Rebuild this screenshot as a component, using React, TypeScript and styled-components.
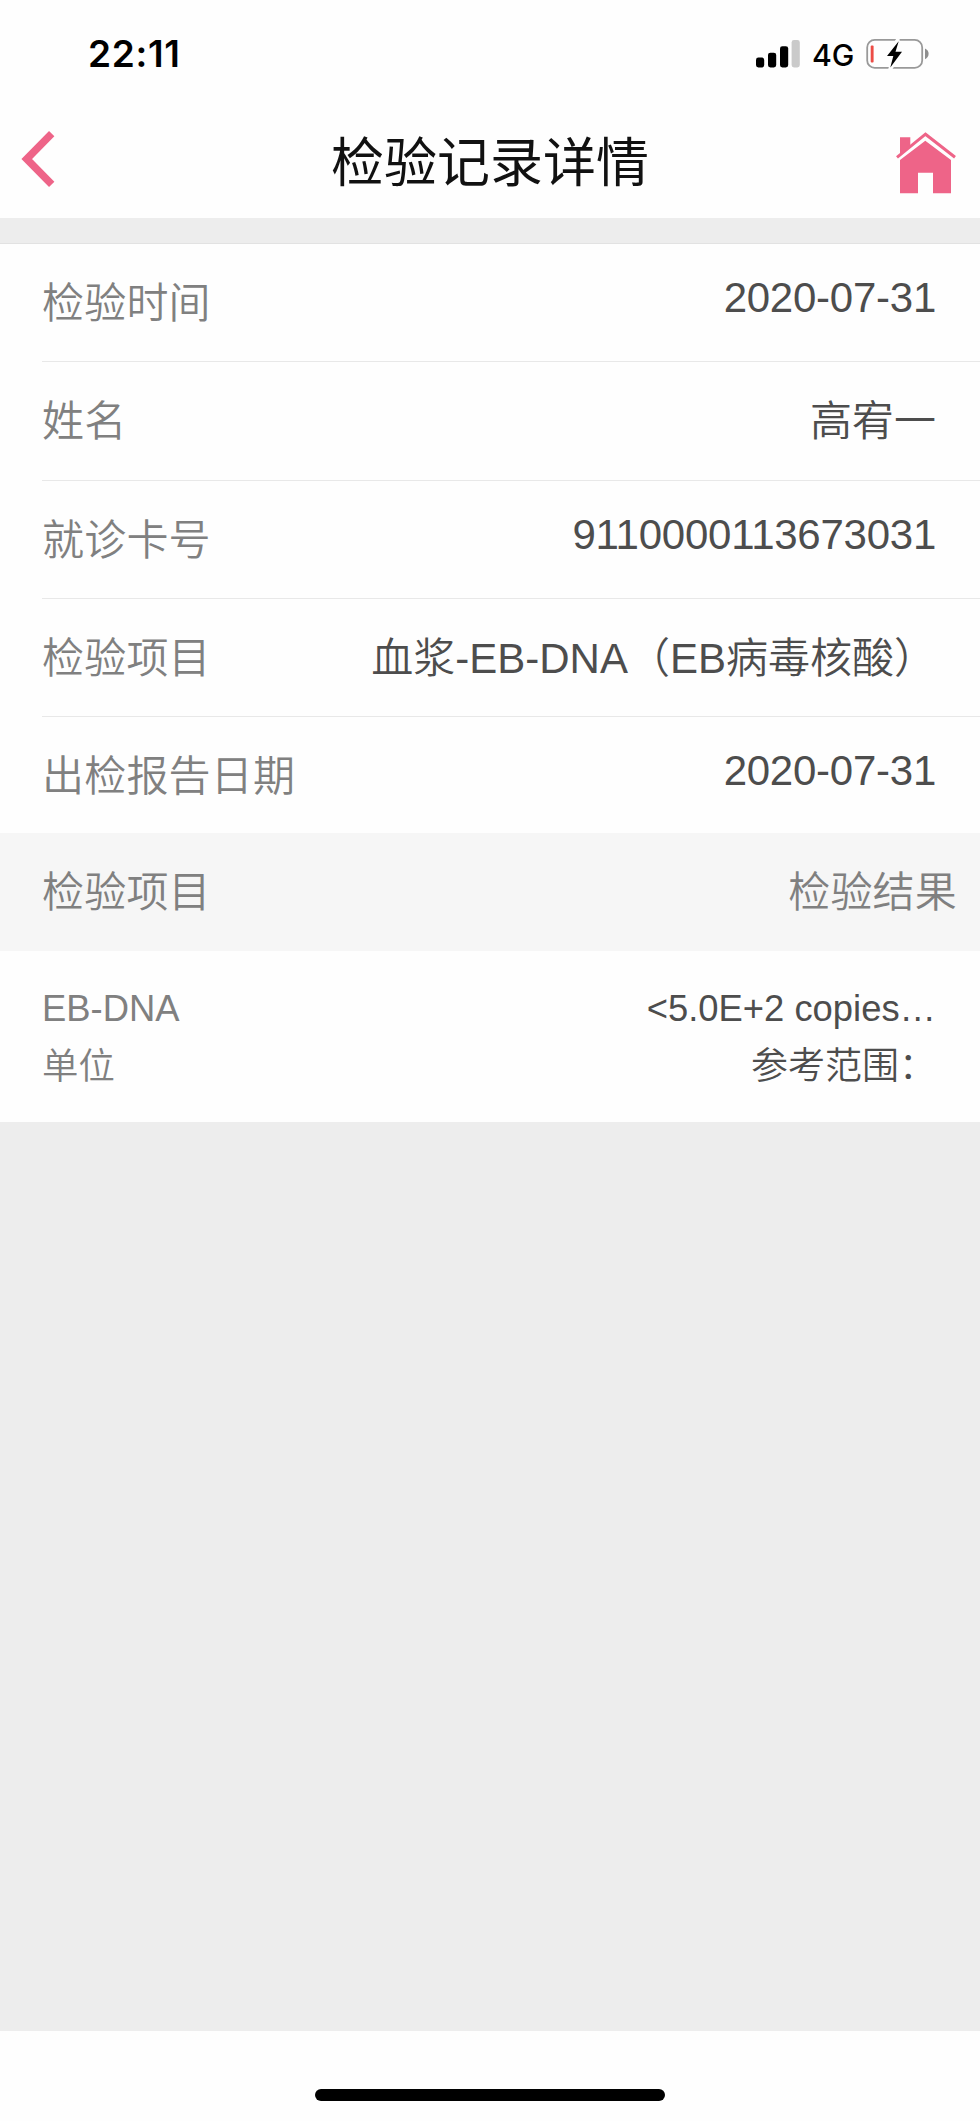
import React from "react";
import styled, { createGlobalStyle } from "styled-components";

const GlobalStyle = createGlobalStyle`
  * { box-sizing: border-box; }
  body {
    margin: 0;
    background: #fefefe;
    font-family: "Liberation Sans", "Noto Sans CJK SC", sans-serif;
  }
`;

const PINK = "#ee6488";

const Screen = styled.div`
  display: flex;
  flex-direction: column;
  width: 980px;
  height: 2121px;
  background: #ededed;
  overflow: hidden;
`;

const StatusBar = styled.div`
  display: flex;
  justify-content: space-between;
  align-items: center;
  height: 107px;
  padding: 0 50px 0 88px;
  background: #fefefe;
  font-family: Inter, sans-serif;
  color: #000;
`;

const Clock = styled.span`
  font-size: 37px;
  font-weight: 600;
  line-height: 44px;
  letter-spacing: 0.7px;
`;

const StatusIcons = styled.div`
  display: flex;
  align-items: center;
`;

const Network = styled.span`
  width: 42px;
  margin: 2px 12px 0 12px;
  font-size: 30.2px;
  font-weight: 450;
  line-height: 36px;
  white-space: nowrap;
`;

const NavBar = styled.header`
  display: grid;
  grid-template-columns: 120px 1fr 120px;
  align-items: center;
  height: 111px;
  background: #fefefe;
`;

const NavButton = styled.button<{ $end?: boolean }>`
  display: flex;
  justify-content: ${(p) => (p.$end ? "flex-end" : "flex-start")};
  padding: ${(p) => (p.$end ? "1px 24px 0 0" : "0 0 7px 21px")};
  border: 0;
  background: none;
`;

const Title = styled.h1`
  margin: 0;
  padding-top: 2px;
  font-size: 53px;
  font-weight: 400;
  line-height: 80px;
  text-align: center;
  color: #111;
`;

const Details = styled.section`
  margin-top: 25px;
  border-top: 1px solid #e2e2e2;
  background: #fefefe;
`;

const DetailRow = styled.div<{ $last?: boolean }>`
  display: flex;
  justify-content: space-between;
  height: ${(p) => (p.$last ? "115.6px" : "118.35px")};
  margin-left: 42px;
  padding: 30px 44px 0 0;
  border-bottom: ${(p) => (p.$last ? "0" : "1px solid #e8e8e8")};
  font-size: 42px;
  line-height: 60px;
  white-space: nowrap;
`;

const Label = styled.span`
  color: #808080;
  font-weight: 350;
  letter-spacing: 0.2px;
`;

const Value = styled.span<{ $numeric?: boolean }>`
  margin-top: ${(p) => (p.$numeric ? "-6px" : "0")};
  letter-spacing: ${(p) => (p.$numeric ? "-0.25px" : "0")};
  font-weight: 350;
  color: #4d4d4d;
`;

const ResultHeader = styled.div`
  display: flex;
  justify-content: space-between;
  height: 118px;
  padding: 30px 23px 0 42px;
  background: #f6f6f6;
  font-size: 42px;
  line-height: 60px;
`;

const Result = styled.div`
  display: grid;
  grid-template-columns: 1fr 294px;
  align-content: start;
  height: 171px;
  padding: 29px 44px 0 42px;
  background: #fefefe;
  font-size: 36.4px;
  line-height: 58px;
`;

const ResultLabel = styled(Label)`
  letter-spacing: 0;
`;

const ResultValue = styled(Value)`
  text-align: right;
  white-space: nowrap;
`;

const RangeValue = styled(ResultValue)`
  font-size: 37px;
`;

const HomeArea = styled.footer`
  display: flex;
  justify-content: center;
  height: 90px;
  margin-top: auto;
  padding-top: 58px;
  background: #fefefe;
`;

const HomeIndicator = styled.div`
  width: 350px;
  height: 12px;
  border-radius: 6px;
  background: #000;
`;

const SignalIcon = () => (
  <svg width="44" height="28" viewBox="0 0 44 28">
    <rect x="0" y="17.5" width="8.2" height="10" rx="2.4" />
    <rect x="12" y="12.7" width="8.2" height="14.8" rx="2.4" />
    <rect x="24" y="6.2" width="8.2" height="21.3" rx="2.4" />
    <rect x="35.6" y="0" width="8.2" height="27.5" rx="2.4" fill="#cacaca" />
  </svg>
);

const BatteryIcon = () => (
  <svg width="64" height="32" viewBox="0 0 64 32">
    <rect x="1.2" y="1.9" width="55" height="28" rx="7.5" fill="none" stroke="#999" strokeWidth="1.8" />
    <path d="M59 10.5c2.2 1 3.6 2.9 3.6 5.3S61.2 20.2 59 21.2z" fill="#8e8e8e" />
    <rect x="4.7" y="7.5" width="2.9" height="17" rx="1" fill="#ec4c45" />
    <path d="M32.2 1 21.5 18h6.3L23.8 32 35.5 13.8h-6.5z" fill="#fefefe" stroke="#fefefe" strokeWidth="3.5" />
    <path d="M32.7 3.2 21 18h6.3L24.3 29.5 36 13.8h-6.5z" />
  </svg>
);

const BackIcon = () => (
  <svg width="34" height="56" viewBox="0 0 34 56">
    <path d="M30.7 2.7 5.7 28l25 25.3" fill="none" stroke={PINK} strokeWidth="7.5" />
  </svg>
);

const HouseIcon = () => (
  <svg width="60" height="62" viewBox="0 0 60 62" fill={PINK}>
    <path d="M1 25.3 29.5 2.2 59 25.3" fill="none" stroke={PINK} strokeWidth="3" />
    <path d="M4 5.3h10.3V14L4 22.3z" />
    <path d="M4 28 29.3 8.7 55 28v33.3H37V40.7H22v20.6H4z" />
  </svg>
);

const details = [
  { label: "检验时间", value: "2020-07-31", numeric: true },
  { label: "姓名", value: "高宥一" },
  { label: "就诊卡号", value: "9110000113673031", numeric: true },
  { label: "检验项目", value: "血浆-EB-DNA（EB病毒核酸）" },
  { label: "出检报告日期", value: "2020-07-31", numeric: true },
];

export default function App() {
  return (
    <>
      <GlobalStyle />
      <Screen>
        <StatusBar>
          <Clock>22:11</Clock>
          <StatusIcons>
            <SignalIcon />
            <Network>4G</Network>
            <BatteryIcon />
          </StatusIcons>
        </StatusBar>
        <NavBar>
          <NavButton aria-label="返回">
            <BackIcon />
          </NavButton>
          <Title>检验记录详情</Title>
          <NavButton $end aria-label="首页">
            <HouseIcon />
          </NavButton>
        </NavBar>
        <Details>
          {details.map((d, i) => (
            <DetailRow key={d.label} $last={i === details.length - 1}>
              <Label>{d.label}</Label>
              <Value $numeric={d.numeric}>{d.value}</Value>
            </DetailRow>
          ))}
        </Details>
        <ResultHeader>
          <Label>检验项目</Label>
          <Label>检验结果</Label>
        </ResultHeader>
        <Result>
          <ResultLabel>EB-DNA</ResultLabel>
          <ResultValue>&lt;5.0E+2 copies…</ResultValue>
          <ResultLabel>单位</ResultLabel>
          <RangeValue>参考范围：</RangeValue>
        </Result>
        <HomeArea>
          <HomeIndicator />
        </HomeArea>
      </Screen>
    </>
  );
}
